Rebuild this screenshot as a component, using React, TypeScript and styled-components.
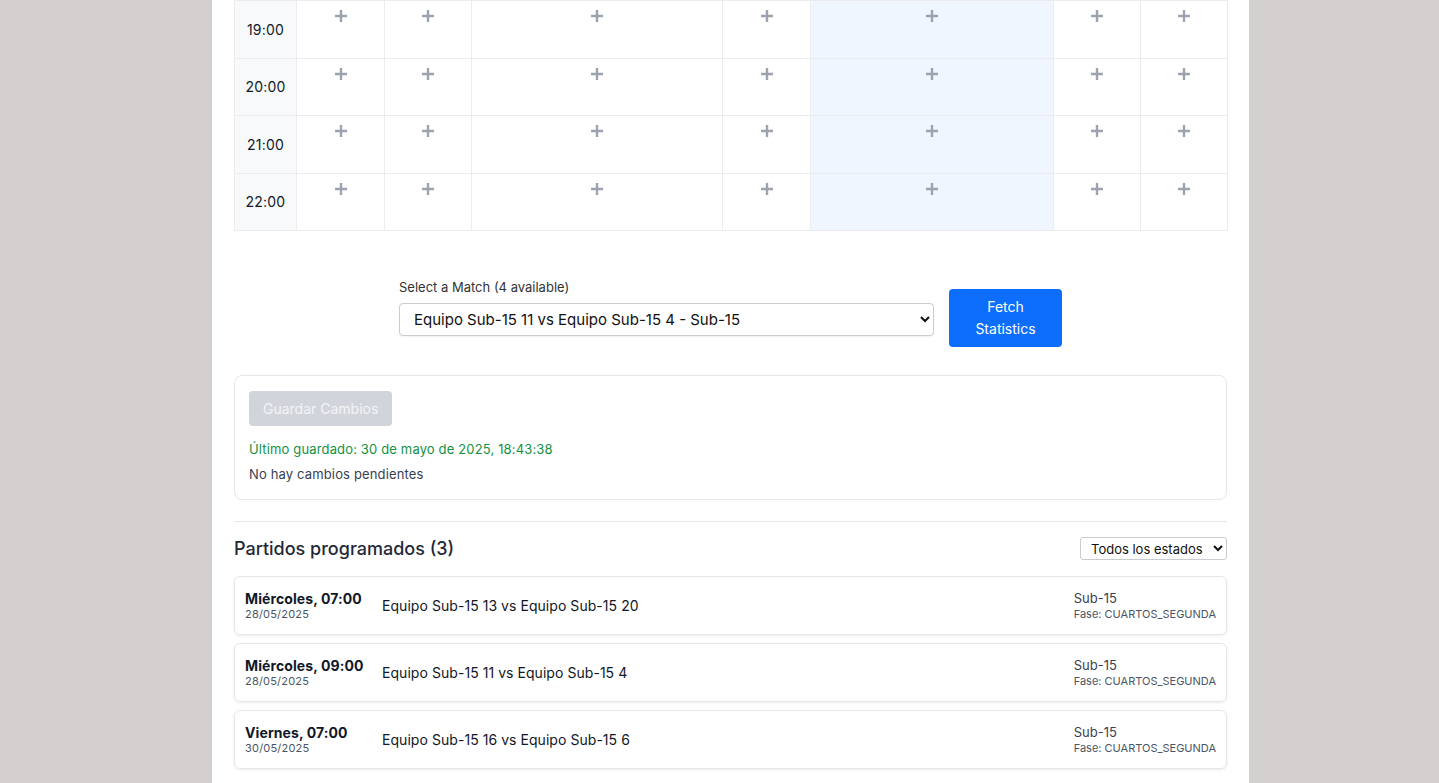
import React from "react";
import styled, { createGlobalStyle } from "styled-components";

const Global = createGlobalStyle`
  html, body { margin: 0; padding: 0; background: #d4d0cf; }
  body { font-family: Inter, "Noto Sans", "Liberation Sans", sans-serif; color: #111827; }
  * { box-sizing: border-box; }
`;

const Page = styled.div`
  display: flex;
  min-height: 100vh;
  padding-left: 212px;
`;

const Panel = styled.main`
  width: 1037px;
  background: #ffffff;
  padding: 0 22px 14px;
  display: flex;
  flex-direction: column;
`;

const Grid = styled.div`
  display: grid;
  grid-template-columns: 62px 88px 87px 251px 88px 243px 87px 87px;
  border-left: 1px solid #ececee;
  border-bottom: 1px solid #ececee;
`;

const TimeCell = styled.div`
  height: 57.5px;
  display: flex;
  align-items: center;
  justify-content: center;
  background: #f8f9fb;
  border-top: 1px solid #ececee;
  border-right: 1px solid #ececee;
  font-size: 14px;
  color: #111827;
  letter-spacing: 0.2px;
`;

const SlotCell = styled.div<{ $hl?: boolean }>`
  height: 57.5px;
  display: flex;
  justify-content: center;
  padding-top: 8px;
  background: ${(p) => (p.$hl ? "#eff6ff" : "#ffffff")};
  border-top: 1px solid #ececee;
  border-right: 1px solid #ececee;
`;

const PlusBtn = styled.button`
  border: none;
  background: transparent;
  padding: 0;
  width: 14px;
  height: 14px;
  display: flex;
  cursor: pointer;
`;

const SelectRow = styled.div`
  display: flex;
  justify-content: center;
  align-items: flex-end;
  gap: 15px;
  margin-top: 48px;
`;

const Field = styled.div`
  display: flex;
  flex-direction: column;
  gap: 8px;
  padding-bottom: 11px;
`;

const Label = styled.label`
  font-size: 13px;
  color: #333;
`;

const MatchSelect = styled.select`
  width: 535px;
  height: 33px;
  font-family: inherit;
  font-size: 15px;
  color: #111;
  padding: 0 10px;
  border: 1px solid #c9ccd1;
  border-radius: 4px;
  background: #fff;
  box-shadow: 0 1px 2px rgba(0, 0, 0, 0.06);
`;

const FetchBtn = styled.button`
  width: 113px;
  height: 58px;
  background: #0d6efd;
  color: #fff;
  border: none;
  border-radius: 4px;
  font-family: inherit;
  font-size: 14px;
  line-height: 22px;
`;

const SaveCard = styled.section`
  margin-top: 28px;
  border: 1px solid #e5e7eb;
  border-radius: 8px;
  padding: 15px 14px 16px;
  display: flex;
  flex-direction: column;
  align-items: flex-start;
`;

const SaveBtn = styled.button`
  height: 35px;
  padding: 0 14px;
  background: #d1d5db;
  color: #f3f4f6;
  border: none;
  border-radius: 4px;
  font-family: inherit;
  font-size: 14px;
`;

const Status = styled.div<{ $ok?: boolean }>`
  font-size: 13px;
  line-height: 17px;
  color: ${(p) => (p.$ok ? "#15913f" : "#374151")};
  margin-top: ${(p) => (p.$ok ? "15px" : "8px")};
  letter-spacing: 0.15px;
`;

const Divider = styled.hr`
  border: none;
  border-top: 1px solid #e5e7eb;
  margin: 21px 0 0;
  width: 100%;
`;

const ListHeader = styled.div`
  display: flex;
  align-items: center;
  justify-content: space-between;
  margin-top: 15px;
`;

const Heading = styled.h2`
  margin: 0;
  font-size: 18px;
  font-weight: 500;
  color: #1f2937;
`;

const StateSelect = styled.select`
  width: 147px;
  height: 23px;
  font-family: inherit;
  font-size: 13px;
  color: #111;
  border: 1px solid #c9ccd1;
  border-radius: 3px;
  background: #fff;
  padding: 0 6px;
`;

const List = styled.div`
  display: flex;
  flex-direction: column;
  gap: 8px;
  margin-top: 16px;
`;

const MatchCard = styled.div`
  height: 59px;
  display: flex;
  align-items: center;
  padding: 0 10px;
  border: 1px solid #e5e7eb;
  border-radius: 6px;
  box-shadow: 0 1px 3px rgba(0, 0, 0, 0.08);
`;

const When = styled.div`
  width: 137px;
  display: flex;
  flex-direction: column;
`;

const Day = styled.span`
  font-size: 14px;
  font-weight: 700;
  color: #111827;
  line-height: 17px;
  letter-spacing: 0.1px;
`;

const DateTxt = styled.span`
  font-size: 11px;
  color: #4b5563;
  line-height: 15px;
  letter-spacing: 0.2px;
`;

const Teams = styled.div`
  flex: 1;
  font-size: 14px;
  color: #111827;
  letter-spacing: 0.05px;
`;

const Meta = styled.div`
  display: flex;
  flex-direction: column;
`;

const Cat = styled.span`
  font-size: 13px;
  color: #374151;
  line-height: 17px;
`;

const Phase = styled.span`
  font-size: 11px;
  color: #4b5563;
  line-height: 15px;
`;

const Plus = () => (
  <PlusBtn aria-label="Añadir">
    <svg width="14" height="14" viewBox="0 0 14 14">
      <path d="M7 1v12M1 7h12" stroke="#9ca3af" strokeWidth="2.4" />
    </svg>
  </PlusBtn>
);

const hours = ["19:00", "20:00", "21:00", "22:00"];
const cols = [0, 1, 2, 3, 4, 5, 6];

const matches = [
  { day: "Miércoles, 07:00", date: "28/05/2025", teams: "Equipo Sub-15 13 vs Equipo Sub-15 20" },
  { day: "Miércoles, 09:00", date: "28/05/2025", teams: "Equipo Sub-15 11 vs Equipo Sub-15 4" },
  { day: "Viernes, 07:00", date: "30/05/2025", teams: "Equipo Sub-15 16 vs Equipo Sub-15 6" },
];

export default function App() {
  return (
    <>
      <Global />
      <Page>
        <Panel>
          <Grid>
            {hours.map((h) => (
              <React.Fragment key={h}>
                <TimeCell>{h}</TimeCell>
                {cols.map((c) => (
                  <SlotCell key={c} $hl={c === 4}>
                    <Plus />
                  </SlotCell>
                ))}
              </React.Fragment>
            ))}
          </Grid>

          <SelectRow>
            <Field>
              <Label>Select a Match (4 available)</Label>
              <MatchSelect defaultValue="m2">
                <option value="m1">Equipo Sub-15 13 vs Equipo Sub-15 20 - Sub-15</option>
                <option value="m2">Equipo Sub-15 11 vs Equipo Sub-15 4 - Sub-15</option>
                <option value="m3">Equipo Sub-15 16 vs Equipo Sub-15 6 - Sub-15</option>
              </MatchSelect>
            </Field>
            <FetchBtn>
              Fetch
              <br />
              Statistics
            </FetchBtn>
          </SelectRow>

          <SaveCard>
            <SaveBtn disabled>Guardar Cambios</SaveBtn>
            <Status $ok>Último guardado: 30 de mayo de 2025, 18:43:38</Status>
            <Status>No hay cambios pendientes</Status>
          </SaveCard>

          <Divider />

          <ListHeader>
            <Heading>Partidos programados (3)</Heading>
            <StateSelect defaultValue="all">
              <option value="all">Todos los estados</option>
            </StateSelect>
          </ListHeader>

          <List>
            {matches.map((m) => (
              <MatchCard key={m.day + m.teams}>
                <When>
                  <Day>{m.day}</Day>
                  <DateTxt>{m.date}</DateTxt>
                </When>
                <Teams>{m.teams}</Teams>
                <Meta>
                  <Cat>Sub-15</Cat>
                  <Phase>Fase: CUARTOS_SEGUNDA</Phase>
                </Meta>
              </MatchCard>
            ))}
          </List>
        </Panel>
      </Page>
    </>
  );
}
